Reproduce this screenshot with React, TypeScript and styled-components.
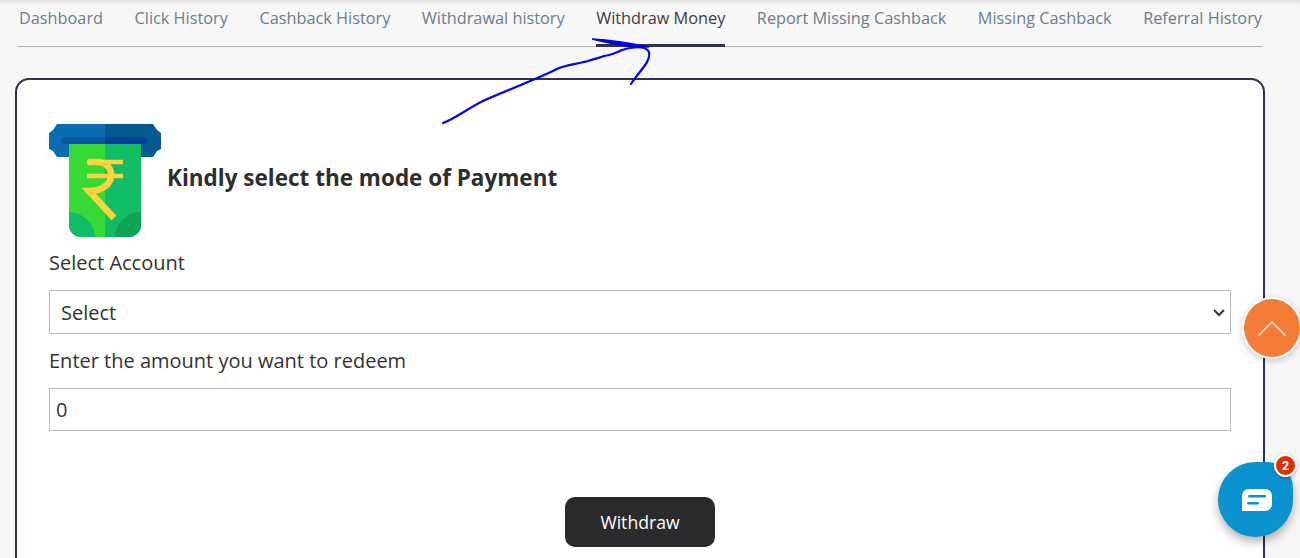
import React from "react";
import styled, { createGlobalStyle } from "styled-components";

const GlobalStyle = createGlobalStyle`
  html, body {
    margin: 0;
    height: 558px;
    overflow: hidden;
    background: #f7f7f7;
    font-family: "Open Sans", "Liberation Sans", sans-serif;
  }
  * {
    box-sizing: border-box;
  }
`;

const Page = styled.div`
  position: relative;
  width: 1300px;
  height: 558px;
  overflow: hidden;
  padding: 0 35px 0 15px;
  box-shadow: inset 0 6px 6px -6px rgba(0, 0, 0, 0.2);
`;

const Tabs = styled.nav`
  display: flex;
  justify-content: space-between;
  height: 47px;
  margin: 0 3px 31px 3px;
  padding-left: 1px;
  border-bottom: 1px solid #b3b3b3;
`;

const Tab = styled.a<{ $active?: boolean }>`
  height: 47px;
  padding-top: 6px;
  font-size: 16.3px;
  line-height: 24px;
  color: ${(props) => (props.$active ? "#3c3c44" : "#6d7b8e")};
  border-bottom: ${(props) => (props.$active ? "3px solid #2d3250" : "none")};
`;

const Card = styled.section`
  height: 520px;
  padding: 44px 32px 0 32px;
  background: #fff;
  border: 2px solid #2d3250;
  border-radius: 14px;
`;

const Heading = styled.div`
  display: flex;
  align-items: center;
  gap: 6px;
  height: 114px;
  margin-bottom: 12px;
`;

const HeadingText = styled.h2`
  margin: 0 0 6px 0;
  font-size: 22.5px;
  line-height: 30px;
  font-weight: 700;
  color: #2e2e2e;
`;

const Label = styled.label`
  display: block;
  font-size: 20px;
  line-height: 26px;
  color: #333;
`;

const SelectWrap = styled.div`
  position: relative;
  width: 1182px;
  height: 44px;
  margin: 14px 0;
`;

const SelectBox = styled.select`
  display: block;
  width: 100%;
  height: 100%;
  padding: 1px 11px 0 11px;
  appearance: none;
  background: #fff;
  border: 1px solid #bdbdbd;
  border-radius: 0;
  font-family: inherit;
  font-size: 20px;
  color: #333;
`;

const Chevron = styled.svg`
  position: absolute;
  right: 5px;
  top: 18px;
  pointer-events: none;
`;

const AmountInput = styled.input`
  display: block;
  width: 1182px;
  height: 43px;
  margin-top: 14px;
  padding: 0 6px 1px 6px;
  background: #fff;
  border: 1px solid #bdbdbd;
  font-family: inherit;
  font-size: 20px;
  color: #333;
`;

const ButtonRow = styled.div`
  display: flex;
  justify-content: center;
  margin-top: 66px;
`;

const WithdrawButton = styled.button`
  width: 150px;
  height: 50px;
  background: #2a2a2c;
  border: none;
  border-radius: 10px;
  font-family: inherit;
  font-size: 17.6px;
  color: #fff;
`;

const Scribble = styled.svg`
  position: absolute;
  left: 0;
  top: 0;
  pointer-events: none;
`;

const ScrollTop = styled.button`
  position: absolute;
  left: 1242px;
  top: 297px;
  width: 60px;
  height: 62px;
  display: flex;
  align-items: center;
  justify-content: center;
  padding: 0;
  background: #f47b36;
  border: 2px solid #fff;
  border-radius: 50%;
  box-shadow: 0 2px 6px rgba(0, 0, 0, 0.2);
`;

const ChatButton = styled.button`
  position: absolute;
  left: 1218px;
  top: 462px;
  width: 75px;
  height: 75px;
  display: flex;
  align-items: center;
  justify-content: center;
  padding: 0 0 0 3px;
  background: #0b93d0;
  border: none;
  border-radius: 50% 26px 50% 50%;
  box-shadow: 0 5px 10px rgba(0, 0, 0, 0.3);
`;

const Badge = styled.span`
  position: absolute;
  left: 1274px;
  top: 454px;
  width: 23px;
  height: 23px;
  display: flex;
  align-items: center;
  justify-content: center;
  background: #dc2f02;
  border: 2px solid #fff;
  border-radius: 50%;
  box-shadow: 0 1px 3px rgba(0, 0, 0, 0.35);
  font-family: "Roboto", "Liberation Sans", sans-serif;
  font-size: 13px;
  font-weight: 700;
  color: #fff;
`;

const tabs = [
  "Dashboard",
  "Click History",
  "Cashback History",
  "Withdrawal history",
  "Withdraw Money",
  "Report Missing Cashback",
  "Missing Cashback",
  "Referral History",
];

const RupeeIcon = () => (
  <svg width="112" height="114" viewBox="0 0 112 114">
    <path d="M8 0H56V33H8L4 27L0 25V9L4 6Z" fill="#0b6cb2" />
    <path d="M104 0H56V33H104L108 27L112 25V9L108 6Z" fill="#055a90" />
    <path d="M56 13H16a3.5 3.5 0 0 0 0 7H56Z" fill="#0a56a0" />
    <path d="M56 13H95a3.5 3.5 0 0 1 0 7H56Z" fill="#0540a0" />
    <path d="M20 20H56V113H32a12 12 0 0 1-12-12Z" fill="#36da36" />
    <path d="M56 20H92V101a12 12 0 0 1-12 12H56Z" fill="#12bb66" />
    <path d="M20 88a26 26 0 0 1 26 25H32a12 12 0 0 1-12-12Z" fill="#12bb66" />
    <path d="M92 88a26 26 0 0 0-26 25H80a12 12 0 0 0 12-12Z" fill="#0fa355" />
    <path d="M38 38H74M38 52H74" fill="none" stroke="#fdd33f" strokeWidth="4.5" />
    <path
      d="M39 38H48C68 38 68 67 40 67L65 94"
      fill="none"
      stroke="#fdd33f"
      strokeWidth="6.5"
    />
  </svg>
);

export default function App() {
  return (
    <Page>
      <GlobalStyle />
      <Tabs>
        {tabs.map((tab) => (
          <Tab key={tab} $active={tab === "Withdraw Money"}>
            {tab}
          </Tab>
        ))}
      </Tabs>
      <Card>
        <Heading>
          <RupeeIcon />
          <HeadingText>Kindly select the mode of Payment</HeadingText>
        </Heading>
        <Label>Select Account</Label>
        <SelectWrap>
          <SelectBox defaultValue="Select">
            <option>Select</option>
          </SelectBox>
          <Chevron width="14" height="9" viewBox="0 0 14 9">
            <path d="M2 2L7 7L12 2" fill="none" stroke="#3a3a3a" strokeWidth="2.2" />
          </Chevron>
        </SelectWrap>
        <Label>Enter the amount you want to redeem</Label>
        <AmountInput defaultValue="0" />
        <ButtonRow>
          <WithdrawButton>Withdraw</WithdrawButton>
        </ButtonRow>
      </Card>

      <Scribble width="1300" height="558" viewBox="0 0 1300 558">
        <path
          d="M443 123C455 119 468 108 485 100C505 91 535 80 557 69C565 65 578 64 588 61C596 58 600 58 604 56C612 55 616 53 622 50C630 47 646 45 649 52C651 62 640 70 631 84"
          fill="none"
          stroke="#0606e0"
          strokeWidth="2.2"
          strokeLinecap="round"
        />
        <path
          d="M592 39C610 40 630 43 649 47C630 48 612 44 592 39Z"
          fill="#0606e0"
          stroke="#0606e0"
          strokeWidth="1.4"
        />
      </Scribble>

      <ScrollTop aria-label="Back to top">
        <svg width="28" height="16" viewBox="0 0 28 16">
          <path
            d="M1 15L14 2L27 15"
            fill="none"
            stroke="#fbd3bb"
            strokeWidth="1.8"
            strokeLinecap="round"
          />
        </svg>
      </ScrollTop>

      <ChatButton aria-label="Chat">
        <svg width="30" height="22" viewBox="0 0 30 22">
          <path
            d="M7 0H23C27 0 30 3 30 7V15C30 19 27 22 23 22H0V7C0 3 3 0 7 0Z"
            fill="#fff"
          />
          <rect x="6" y="6" width="18" height="2.5" rx="1.2" fill="#0b93d0" />
          <rect x="5" y="13" width="12" height="2.5" rx="1.2" fill="#0b93d0" />
        </svg>
      </ChatButton>
      <Badge>2</Badge>
    </Page>
  );
}
